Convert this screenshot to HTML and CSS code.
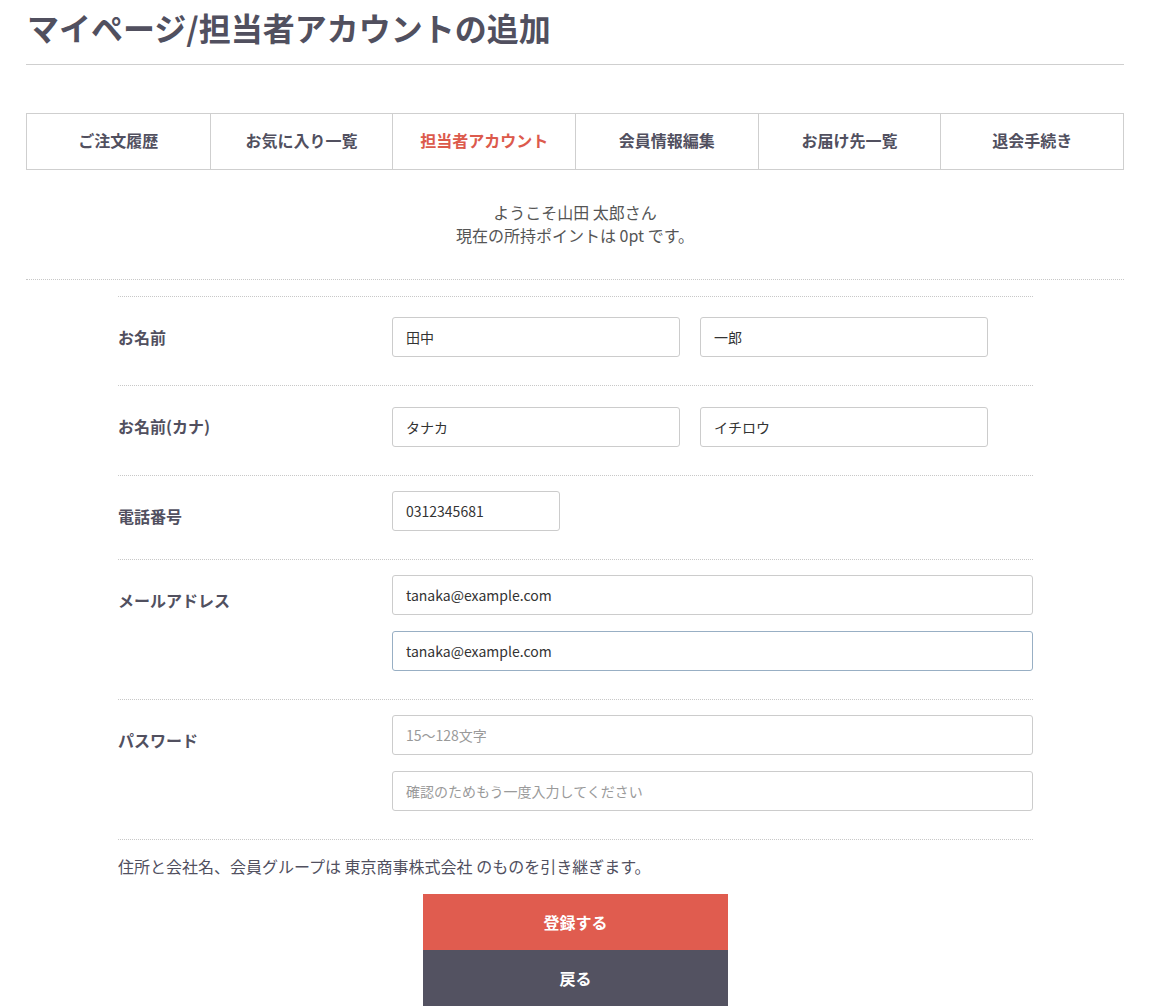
FILE: index.html
```html
<!DOCTYPE html>
<html lang="ja">
<head>
<meta charset="utf-8">
<title>マイページ/担当者アカウントの追加</title>
<link rel="stylesheet" href="styles.css">
</head>
<body>
<div class="page">
  <h1 class="title">マイページ/担当者アカウントの追加</h1>

  <nav class="tabs">
    <a class="tab">ご注文履歴</a>
    <a class="tab">お気に入り一覧</a>
    <a class="tab tab--active">担当者アカウント</a>
    <a class="tab">会員情報編集</a>
    <a class="tab">お届け先一覧</a>
    <a class="tab">退会手続き</a>
  </nav>

  <div class="welcome">
    <p>ようこそ山田 太郎さん</p>
    <p>現在の所持ポイントは 0pt です。</p>
  </div>

  <div class="form">
    <div class="row row--pair">
      <div class="label">お名前</div>
      <div class="fields">
        <div class="pair">
          <input class="input input--half" type="text" value="田中">
          <input class="input input--half" type="text" value="一郎">
        </div>
      </div>
    </div>
    <div class="row row--pair">
      <div class="label">お名前(カナ)</div>
      <div class="fields">
        <div class="pair">
          <input class="input input--half" type="text" value="タナカ">
          <input class="input input--half" type="text" value="イチロウ">
        </div>
      </div>
    </div>
    <div class="row">
      <div class="label">電話番号</div>
      <div class="fields">
        <input class="input input--tel" type="text" value="0312345681">
      </div>
    </div>
    <div class="row">
      <div class="label">メールアドレス</div>
      <div class="fields">
        <input class="input" type="text" value="tanaka@example.com">
        <input class="input input--focus" type="text" value="tanaka@example.com">
      </div>
    </div>
    <div class="row row--last">
      <div class="label">パスワード</div>
      <div class="fields">
        <input class="input" type="password" placeholder="15〜128文字">
        <input class="input" type="password" placeholder="確認のためもう一度入力してください">
      </div>
    </div>

    <p class="note">住所と会社名、会員グループは 東京商事株式会社 のものを引き継ぎます。</p>

    <div class="actions">
      <button class="btn btn--primary" type="button">登録する</button>
      <button class="btn btn--back" type="button">戻る</button>
    </div>
  </div>
</div>
</body>
</html>
```

FILE: styles.css
```css
* { box-sizing: border-box; }

body {
  margin: 0;
  font-family: "Noto Sans CJK JP", "Noto Sans", sans-serif;
  color: #51505f;
  background: #fff;
}

.page {
  padding: 0 26px;
}

.title {
  margin: 0;
  padding: 3px 0 13px 1px;
  font-size: 32px;
  line-height: 48px;
  font-weight: 700;
  color: #51505f;
  border-bottom: 1px solid #cfcfcf;
}

.tabs {
  margin-top: 48px;
  display: grid;
  grid-template-columns: repeat(6, 1fr);
  border: 1px solid #cfcfcf;
}

.tab {
  height: 55px;
  padding-bottom: 3px;
  display: flex;
  align-items: center;
  justify-content: center;
  font-size: 16px;
  font-weight: 700;
  color: #51505f;
  border-left: 1px solid #cfcfcf;
}

.tab:first-child { border-left: none; }

.tab--active { color: #dc5a4c; }

.welcome {
  margin-top: 31px;
  padding-bottom: 32px;
  border-bottom: 1px dotted #c8c8c8;
  text-align: center;
  font-size: 16px;
  line-height: 23px;
  color: #555;
}

.welcome p { margin: 0; }

.form {
  width: 915px;
  margin: 16px 0 0 92px;
}

.row {
  display: grid;
  grid-template-columns: 274px 641px;
  padding: 15px 0 28px;
  border-top: 1px dotted #c8c8c8;
}

.row--last { border-bottom: 1px dotted #c8c8c8; }

.label {
  margin-top: 13px;
  font-size: 16px;
  line-height: 24px;
  font-weight: 700;
  color: #51505f;
}

.fields {
  display: flex;
  flex-direction: column;
  gap: 16px;
}

.row--pair .fields { padding-top: 5px; }

.row--pair + .row--pair .fields { padding-top: 6px; }

.pair {
  display: flex;
  gap: 20px;
}

.input {
  display: block;
  width: 100%;
  height: 40px;
  padding: 0 13px;
  border: 1px solid #cccccc;
  border-radius: 3px;
  font-family: "Noto Sans CJK JP", "Noto Sans", sans-serif;
  font-size: 14px;
  color: #333;
  background: #fff;
  outline: none;
}

.input::placeholder { color: #9a9a9a; }

.input--half { width: 288px; }

.input--tel { width: 168px; }

.input--focus { border-color: #98afc4; }

.note {
  margin: 15px 0 0;
  font-size: 16px;
  line-height: 23px;
  color: #51505f;
}

.actions {
  margin-top: 16px;
  display: flex;
  flex-direction: column;
  align-items: center;
}

.btn {
  width: 305px;
  height: 56px;
  border: none;
  border-radius: 0;
  font-family: "Noto Sans CJK JP", "Noto Sans", sans-serif;
  font-size: 16px;
  font-weight: 700;
  color: #fff;
  cursor: pointer;
}

.btn--primary { background: #e05c4f; }

.btn--back { background: #535261; }
```
